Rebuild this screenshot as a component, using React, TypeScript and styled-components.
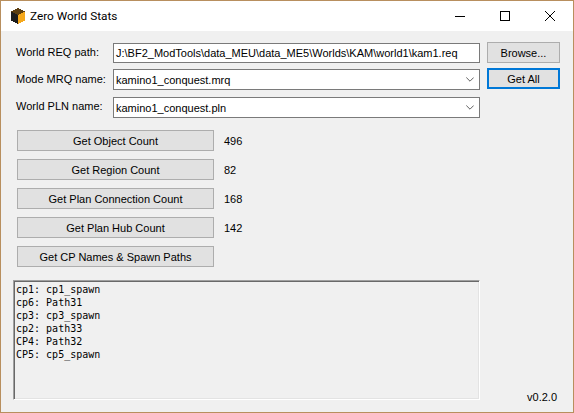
import React from "react";
import styled, { createGlobalStyle } from "styled-components";

const Global = createGlobalStyle`
  html, body { margin: 0; padding: 0; background: #f0f0f0; }
  * { box-sizing: border-box; }
`;

const Win = styled.div`
  width: 574px;
  height: 413px;
  border: 1px solid #b88f5e;
  background: #f0f0f0;
  font-family: "Liberation Sans", Arial, sans-serif;
  font-size: 11px;
  color: #000;
  display: flex;
  flex-direction: column;
  overflow: hidden;
`;

const TitleBar = styled.div`
  height: 30px;
  background: #fff;
  display: flex;
  align-items: center;
  padding-left: 9px;
  flex: none;
`;

const TitleText = styled.span`
  margin-left: 4px;
  font-family: Roboto, sans-serif;
  font-size: 11.8px;
`;

const WinButtons = styled.div`
  margin-left: auto;
  margin-right: 1px;
  display: flex;
  height: 100%;
`;

const WinButton = styled.div`
  width: 45px;
  height: 100%;
  display: flex;
  align-items: center;
  justify-content: center;
`;

const Client = styled.div`
  flex: 1;
  padding: 11px 13px 0 13px;
  position: relative;
  display: flex;
  flex-direction: column;
`;

const Form = styled.div`
  display: grid;
  grid-template-columns: 90px 367px 73px;
  column-gap: 7px;
  grid-template-rows: 21px 21px 21px;
  row-gap: 6px;
  margin-left: 2px;
  align-items: start;
`;

const Label = styled.div`
  white-space: nowrap;
  line-height: 21px;
`;

const Field = styled.div<{ $top?: number; $h?: number }>`
  height: ${(p) => p.$h ?? 21}px;
  margin-top: ${(p) => p.$top ?? 0}px;
  background: #fff;
  border: 1px solid #7a7a7a;
  display: flex;
  align-items: center;
  padding-left: 2px;
  padding-right: 5px;
  justify-content: space-between;
  white-space: nowrap;
  overflow: hidden;
`;

const SideButton = styled.div<{ $active?: boolean }>`
  height: 21px;
  margin-top: ${(p) => (p.$active ? "-1px" : "0")};
  background: #e1e1e1;
  border: ${(p) => (p.$active ? "2px solid #0078d7" : "1px solid #adadad")};
  display: flex;
  align-items: center;
  justify-content: center;
`;

const Actions = styled.div`
  margin-top: 13px;
  margin-left: 3px;
  display: grid;
  grid-template-columns: 197px auto;
  grid-auto-rows: 21px;
  row-gap: 8px;
  column-gap: 10px;
  align-items: center;
  justify-content: start;
`;

const ActionButton = styled.div`
  height: 21px;
  background: #e1e1e1;
  border: 1px solid #adadad;
  display: flex;
  align-items: center;
  justify-content: center;
`;

const Count = styled.div``;

const Output = styled.pre`
  margin: 13px 0 0 -1px;
  width: 467px;
  height: 120px;
  background: #f0f0f0;
  border-style: solid;
  border-width: 1px;
  border-color: #a0a0a0 #fff #fff #a0a0a0;
  box-shadow: inset 1px 1px 0 #696969, inset -1px -1px 0 #e3e3e3;
  padding: 2px 0 0 2px;
  font-family: "DejaVu Sans Mono", monospace;
  font-size: 10px;
  line-height: 13px;
  color: #000;
`;

const Version = styled.div`
  position: absolute;
  right: 16px;
  bottom: 9px;
`;

const Chevron = () => (
  <svg width="8" height="5" viewBox="0 0 8 5" fill="none">
    <path d="M0.3 0.5 L4 4.2 L7.7 0.5" stroke="#606060" strokeWidth="1" />
  </svg>
);

const AppIcon = () => (
  <svg width="16" height="16" viewBox="0 0 16 16" shapeRendering="crispEdges">
    <polygon points="8,0 15,3.5 8,7 1,3.5" fill="#5a3d10" />
    <polygon points="1,3.5 8,7 8,16 1,12.5" fill="#1c1c1c" />
    <polygon points="8,7 15,3.5 15,12.5 8,16" fill="#f5a81c" />
  </svg>
);

const rows: [string, string][] = [
  ["Get Object Count", "496"],
  ["Get Region Count", "82"],
  ["Get Plan Connection Count", "168"],
  ["Get Plan Hub Count", "142"],
  ["Get CP Names & Spawn Paths", ""],
];

export default function App() {
  return (
    <Win>
      <Global />
      <TitleBar>
        <AppIcon />
        <TitleText>Zero World Stats</TitleText>
        <WinButtons>
          <WinButton>
            <svg width="10" height="10" viewBox="0 0 10 10"><path d="M0 5.5H10" stroke="#000" /></svg>
          </WinButton>
          <WinButton>
            <svg width="10" height="10" viewBox="0 0 10 10"><rect x="0.5" y="0.5" width="9" height="9" fill="none" stroke="#000" /></svg>
          </WinButton>
          <WinButton>
            <svg width="10" height="10" viewBox="0 0 10 10"><path d="M0 0L10 10M10 0L0 10" stroke="#000" /></svg>
          </WinButton>
        </WinButtons>
      </TitleBar>
      <Client>
        <Form>
          <Label>World REQ path:</Label>
          <Field $top={1} $h={20}>J:\BF2_ModTools\data_MEU\data_ME5\Worlds\KAM\world1\kam1.req</Field>
          <SideButton>Browse...</SideButton>
          <Label>Mode MRQ name:</Label>
          <Field>kamino1_conquest.mrq<Chevron /></Field>
          <SideButton $active>Get All</SideButton>
          <Label>World PLN name:</Label>
          <Field $top={1}>kamino1_conquest.pln<Chevron /></Field>
        </Form>
        <Actions>
          {rows.map(([t, c]) => (
            <React.Fragment key={t}>
              <ActionButton>{t}</ActionButton>
              <Count>{c}</Count>
            </React.Fragment>
          ))}
        </Actions>
        <Output>{`cp1: cp1_spawn
cp6: Path31
cp3: cp3_spawn
cp2: path33
CP4: Path32
CP5: cp5_spawn`}</Output>
        <Version>v0.2.0</Version>
      </Client>
    </Win>
  );
}
